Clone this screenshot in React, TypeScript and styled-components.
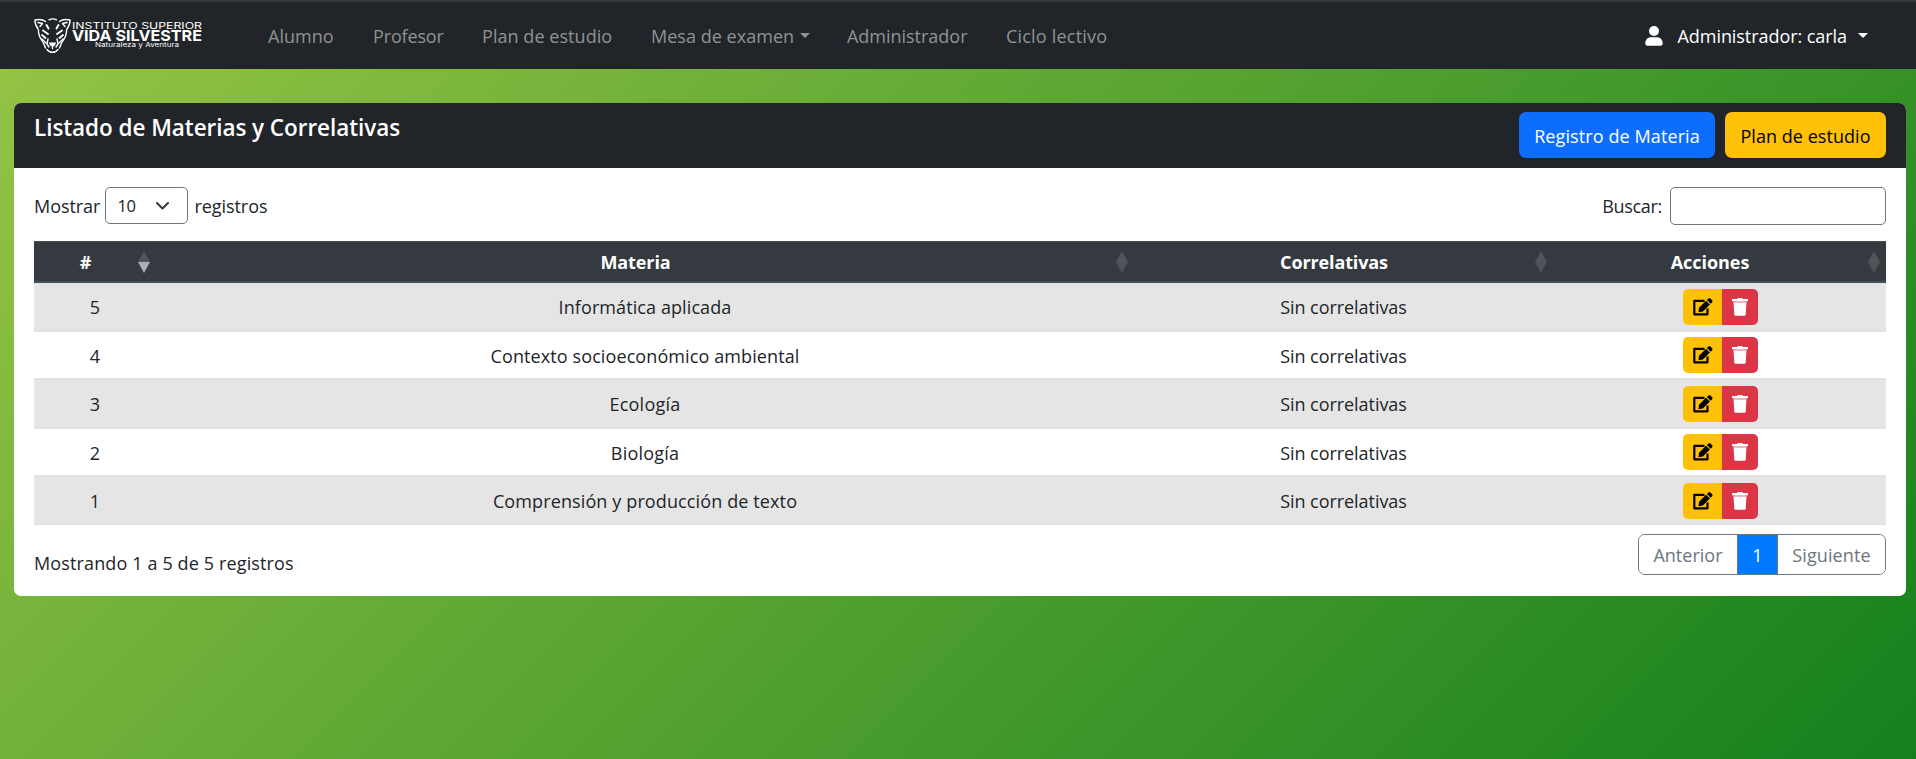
import React from "react";
import styled, { createGlobalStyle } from "styled-components";

const GlobalStyle = createGlobalStyle`
  * { box-sizing: border-box; }
  html, body { margin: 0; }
  body {
    min-height: 759px;
    overflow: hidden;
    font-family: "Open Sans", "Noto Sans", sans-serif;
    font-size: 18px;
    line-height: 28px;
    color: #212529;
    background: linear-gradient(135deg, #97c545 0%, #14801d 100%);
  }
`;

const Txt = styled.span<{ $ls?: number }>`
  white-space: nowrap;
  letter-spacing: ${(p) => p.$ls ?? 0}px;
`;

const Navbar = styled.nav`
  height: 69px;
  padding: 0 48px 0 34px;
  display: flex;
  align-items: center;
  background: #212529;
  border-top: 2px solid #38353b;
`;

const NavLinks = styled.ul`
  display: flex;
  list-style: none;
  margin: 0 0 0 65px;
  padding: 0;
`;

const NavLink = styled.li<{ $w: number }>`
  width: ${(p) => p.$w}px;
  display: flex;
  align-items: center;
  color: #909294;
`;

const Caret = styled.span<{ $gap: number }>`
  margin-left: ${(p) => p.$gap}px;
  border: 5px solid transparent;
  border-top-color: currentColor;
  border-bottom: 0;
`;

const UserMenu = styled.div`
  margin-left: auto;
  display: flex;
  align-items: center;
  color: #fff;
  svg { margin-right: 15px; }
`;

const Card = styled.section`
  margin: 34px 10px 0 14px;
  height: 493px;
  border-radius: 7px;
  overflow: hidden;
  background: #fff;
`;

const CardHeader = styled.header`
  height: 65px;
  padding: 9px 20px 0;
  display: flex;
  justify-content: space-between;
  align-items: flex-start;
  color: #fff;
  background: #212529;
`;

const Title = styled.h1`
  margin: 1px 0 0;
  font-size: 22.5px;
  font-weight: 600;
  line-height: 29px;
`;

const Actions = styled.div`
  display: flex;
  gap: 10px;
`;

const Button = styled.button<{ $w: number; $bg: string; $fg: string }>`
  width: ${(p) => p.$w}px;
  height: 46px;
  padding: 2px 0 0;
  border: 0;
  border-radius: 7px;
  font: inherit;
  color: ${(p) => p.$fg};
  background: ${(p) => p.$bg};
`;

const CardBody = styled.div`
  padding: 19px 20px 0;
`;

const Controls = styled.div`
  height: 54px;
  display: flex;
  justify-content: space-between;
  align-items: flex-start;
`;

const Field = styled.label`
  display: flex;
  align-items: center;
  line-height: 26px;
`;

const Select = styled.span`
  width: 83px;
  height: 37px;
  margin: 0 6px 0 5px;
  padding: 0 18px 0 11px;
  display: flex;
  align-items: center;
  justify-content: space-between;
  border: 1px solid #6c757d;
  border-radius: 5px;
  font-size: 16.5px;
`;

const Search = styled.input`
  width: 216px;
  height: 38px;
  margin-left: 8px;
  border: 1px solid #6c757d;
  border-radius: 5px;
`;

const Table = styled.table`
  width: 1852px;
  table-layout: fixed;
  border-collapse: separate;
  border-spacing: 0;
  text-align: center;
`;

const Th = styled.th<{ $w: number }>`
  width: ${(p) => p.$w}px;
  height: 42px;
  padding: 0 6px;
  font-weight: 700;
  color: #fff;
  background: #343a40;
  border-top: 1px solid #454d55;
  border-bottom: 2px solid #454d55;
`;

const HeadCell = styled.div`
  display: grid;
  grid-template-columns: 1fr 12px;
  column-gap: 7px;
  align-items: center;
`;

const Row = styled.tr<{ $h: number; $odd: boolean; $last: boolean }>`
  height: ${(p) => p.$h}px;
  background: ${(p) => (p.$odd ? "#e5e5e5" : "#fff")};
  td {
    padding: ${(p) => (p.$odd ? 0 : 2)}px 0 0;
    border-bottom: ${(p) => (p.$last ? 1 : 2)}px solid #dee2e6;
  }
  td:last-child { padding: 0 0 0 2px; }
`;

const ButtonGroup = styled.div`
  display: inline-flex;
  vertical-align: middle;
  height: 36px;
  border-radius: 5px;
  overflow: hidden;
`;

const IconButton = styled.button<{ $w: number; $bg: string }>`
  width: ${(p) => p.$w}px;
  padding: 0;
  border: 0;
  display: flex;
  align-items: center;
  justify-content: center;
  background: ${(p) => p.$bg};
`;

const Footer = styled.footer`
  padding-top: 9px;
  display: flex;
  justify-content: space-between;
  align-items: flex-start;
`;

const Info = styled.div`
  padding-top: 15px;
`;

const Pagination = styled.div`
  width: 248px;
  height: 41px;
  display: flex;
  border: 1px solid #6c757d;
  border-radius: 7px;
  overflow: hidden;
`;

const Page = styled.span<{ $w: number; $active?: boolean }>`
  width: ${(p) => p.$w}px;
  display: flex;
  align-items: center;
  justify-content: center;
  color: ${(p) => (p.$active ? "#fff" : "#6c757d")};
  background: ${(p) => (p.$active ? "#007bff" : "#fff")};
  border: solid #6c757d;
  border-width: ${(p) => (p.$active ? "0 1px" : "0")};
`;

const Logo = () => (
  <svg width="169" height="36" viewBox="0 0 169 36" fill="#fff">
    <g fill="none" stroke="#fff" strokeWidth="1.4" strokeLinecap="round" strokeLinejoin="round">
      <path d="M4 11C2 8 .7 4 1 2c4-1 8-.5 10.500 1.500M33 11c2-3 3.300-7 3-9-4-1-8-.5-10.500 1.500" />
      <path d="M4 4.500l4.500 1L6 8.500M33 4.500l-4.500 1L31 8.500" />
      <path d="M15 1.800c2.500-1.200 5-1.200 7.500 0M4.500 12c-.5 6 2.500 9 5 13l2 5M32.500 12c.5 6-2.500 9-5 13l-2 5" />
      <path d="M13 31.500c1.500 2 3.500 2.800 5.500 2.800s4-.8 5.500-2.800" />
      <path d="M8 21l4 4M29 21l-4 4M14 21l-1 5 2 3M23 21l1 5-2 3M18.500 28v2.500" />
    </g>
    <g fill="none" stroke="#fff" strokeWidth="1.900" strokeLinecap="round">
      <path d="M12.500 7l2 3.500M24.500 7l-2 3.500M9 12.500l5 3.500M28 12.500l-5 3.500M8 17l3.500 3M29 17l-3.500 3" />
    </g>
    <path d="M14.800 24.500h7.400l-1.400 3-2.300 1.500-2.300-1.500z" />
    <g fontFamily="Inter, sans-serif">
      <text x="38" y="10.500" fontSize="8.300" textLength="130" lengthAdjust="spacingAndGlyphs">INSTITUTO SUPERIOR</text>
      <text x="38" y="23" fontSize="15.200" fontWeight="700" textLength="130" lengthAdjust="spacingAndGlyphs">VIDA SILVESTRE</text>
      <text x="61" y="29" fontSize="6.500" textLength="84" lengthAdjust="spacingAndGlyphs">Naturaleza y Aventura</text>
    </g>
  </svg>
);

const UserIcon = () => (
  <svg width="18" height="20" viewBox="0 0 18 20" fill="#fff">
    <circle cx="9" cy="5" r="5" />
    <path d="M.3 17.500C.3 13.500 3 11.300 6 11.300h6c3 0 5.700 2.200 5.700 6.200 0 1.300-.8 2.200-2 2.200H2.300c-1.200 0-2-.9-2-2.200z" />
  </svg>
);

const Chevron = () => (
  <svg width="13" height="8" viewBox="0 0 13 8" fill="none" stroke="#343a40" strokeWidth="2" strokeLinecap="round" strokeLinejoin="round">
    <path d="M1 1l5.500 5.500L12 1" />
  </svg>
);

const SortIcon = ({ desc }: { desc?: boolean }) => (
  <svg width="12" height="22" viewBox="0 0 12 22">
    <path d="M6 0l6 11H0z" fill="#505459" />
    <path d="M6 22L0 11h12z" fill={desc ? "#adb0b3" : "#505459"} />
  </svg>
);

const EditIcon = () => (
  <svg width="20" height="18" viewBox="0 0 20 18">
    <path d="M11.500 2.800H1.300v13.500h13.200V10.500" fill="none" stroke="#000" strokeWidth="2.200" strokeLinejoin="round" />
    <path d="M5.500 14.300l.5-4.500L13 2.800l3.900 3.800-7 7z" />
    <path d="M13.900 2l1.500-1.400c.6-.6 1.500-.6 2.100 0l1.600 1.600c.6.600.6 1.400 0 2l-1.500 1.500z" />
  </svg>
);

const TrashIcon = () => (
  <svg width="16" height="18" viewBox="0 0 16 18" fill="#fff">
    <path d="M0 1h5l1-1h4l1 1h5v2.200H0z" />
    <path d="M1.300 3.200h13.400v1.300H1.300z" opacity=".65" />
    <path d="M1.500 4.500h13l-.8 12c-.1.900-.6 1.300-1.400 1.300H3.700c-.8 0-1.300-.4-1.400-1.300z" />
  </svg>
);

const links = [
  { label: "Alumno", w: 105, ls: 0 },
  { label: "Profesor", w: 109, ls: -0.15 },
  { label: "Plan de estudio", w: 169, ls: 0.05 },
  { label: "Mesa de examen", w: 196, ls: 0.03, caret: true },
  { label: "Administrador", w: 159, ls: -0.02 },
  { label: "Ciclo lectivo", w: 110, ls: 0.2 },
];

const columns = [
  { label: "#", w: 122, ls: 0 },
  { label: "Materia", w: 978, ls: -0.1 },
  { label: "Correlativas", w: 419, ls: -0.13 },
  { label: "Acciones", w: 333, ls: -0.05 },
];

const rows = [
  { id: 5, name: "Informática aplicada", h: 49, ls: 0.09 },
  { id: 4, name: "Contexto socioeconómico ambiental", h: 48, ls: 0.1 },
  { id: 3, name: "Ecología", h: 49, ls: 0.25 },
  { id: 2, name: "Biología", h: 48, ls: 0.2 },
  { id: 1, name: "Comprensión y producción de texto", h: 48, ls: 0.12 },
];

export default function App() {
  return (
    <>
      <GlobalStyle />
      <Navbar>
        <Logo />
        <NavLinks>
          {links.map((l) => (
            <NavLink key={l.label} $w={l.w}>
              <Txt $ls={l.ls}>{l.label}</Txt>
              {l.caret && <Caret $gap={6} />}
            </NavLink>
          ))}
        </NavLinks>
        <UserMenu>
          <UserIcon />
          <Txt $ls={-0.06}>Administrador: carla</Txt>
          <Caret $gap={11} />
        </UserMenu>
      </Navbar>
      <Card>
        <CardHeader>
          <Title><Txt $ls={-0.06}>Listado de Materias y Correlativas</Txt></Title>
          <Actions>
            <Button $w={196} $bg="#0d6efd" $fg="#fff"><Txt $ls={0.1}>Registro de Materia</Txt></Button>
            <Button $w={161} $bg="#ffc107" $fg="#000"><Txt $ls={0.05}>Plan de estudio</Txt></Button>
          </Actions>
        </CardHeader>
        <CardBody>
          <Controls>
            <Field>
              <Txt $ls={-0.05}>Mostrar</Txt>
              <Select><Txt $ls={-0.4}>10</Txt><Chevron /></Select>
              <Txt $ls={-0.05}>registros</Txt>
            </Field>
            <Field>
              <Txt $ls={-0.3}>Buscar:</Txt>
              <Search />
            </Field>
          </Controls>
          <Table>
            <thead>
              <tr>
                {columns.map((c, i) => (
                  <Th key={c.label} $w={c.w}>
                    <HeadCell><Txt $ls={c.ls}>{c.label}</Txt><SortIcon desc={i === 0} /></HeadCell>
                  </Th>
                ))}
              </tr>
            </thead>
            <tbody>
              {rows.map((r, i) => (
                <Row key={r.id} $h={r.h} $odd={i % 2 === 0} $last={i === rows.length - 1}>
                  <td><Txt>{r.id}</Txt></td>
                  <td><Txt $ls={r.ls}>{r.name}</Txt></td>
                  <td><Txt $ls={-0.05}>Sin correlativas</Txt></td>
                  <td>
                    <ButtonGroup>
                      <IconButton $w={39} $bg="#ffc107"><EditIcon /></IconButton>
                      <IconButton $w={36} $bg="#dc3545"><TrashIcon /></IconButton>
                    </ButtonGroup>
                  </td>
                </Row>
              ))}
            </tbody>
          </Table>
          <Footer>
            <Info><Txt $ls={0.13}>Mostrando 1 a 5 de 5 registros</Txt></Info>
            <Pagination>
              <Page $w={98}><Txt $ls={0.02}>Anterior</Txt></Page>
              <Page $w={41} $active><Txt>1</Txt></Page>
              <Page $w={107}><Txt $ls={0.1}>Siguiente</Txt></Page>
            </Pagination>
          </Footer>
        </CardBody>
      </Card>
    </>
  );
}
